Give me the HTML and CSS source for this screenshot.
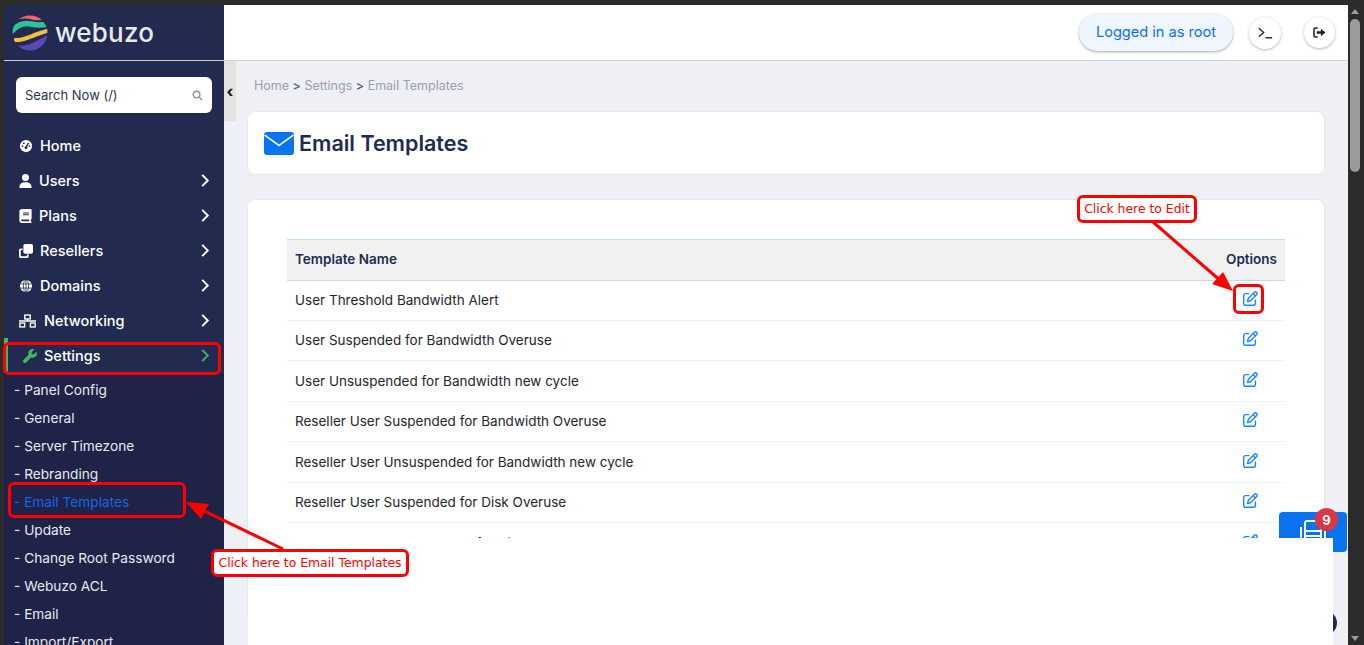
FILE: index.html
```html
<!DOCTYPE html>
<html lang="en">
<head>
<meta charset="utf-8">
<title>Email Templates</title>
<link rel="stylesheet" href="styles.css">
</head>
<body>
<svg class="defs" width="0" height="0">
  <symbol id="i-edit" viewBox="0 0 512 512"><path d="M441 58.9L453.1 71c9.4 9.4 9.4 24.6 0 33.9L424 134.1 377.9 88 407 58.9c9.4-9.4 24.6-9.4 33.9 0zM209.8 256.2L344 121.9 390.1 168 255.8 302.2c-2.9 2.9-6.5 5-10.4 6.1l-58.5 16.7 16.7-58.5c1.1-3.9 3.2-7.5 6.1-10.4zM373.1 25L175.8 222.2c-8.7 8.7-15 19.4-18.3 31.1l-28.6 100c-2.4 8.4-.1 17.4 6.1 23.6s15.2 8.5 23.6 6.1l100-28.6c11.8-3.4 22.5-9.7 31.1-18.3L487 138.9c28.1-28.1 28.1-73.7 0-101.8L474.9 25C446.8-3.1 401.2-3.1 373.1 25zM88 64C39.4 64 0 103.4 0 152V424c0 48.6 39.4 88 88 88H360c48.6 0 88-39.4 88-88V312c0-13.3-10.7-24-24-24s-24 10.7-24 24V424c0 22.1-17.9 40-40 40H88c-22.1 0-40-17.9-40-40V152c0-22.1 17.9-40 40-40H200c13.3 0 24-10.7 24-24s-10.7-24-24-24H88z"/></symbol>
  <symbol id="i-chev" viewBox="0 0 10 16"><path d="M2 2l6 6-6 6" fill="none" stroke="currentColor" stroke-width="2"/></symbol>
</svg>
<div class="strip-top"></div>
<div class="window">
  <div class="strip-left"></div>
  <div class="app">
    <aside class="sidebar">
      <div class="brand">
        <svg class="logo" viewBox="0 0 36 36">
          <defs><clipPath id="logo-clip"><circle cx="18" cy="18" r="17.5"/></clipPath></defs>
          <g clip-path="url(#logo-clip)" fill="none">
            <path d="M0 3C8 1 14 0 20 2C26 3.500 30 3 36 1" stroke="#f0646a" stroke-width="5"/>
            <path d="M-1 17C6 9 12 7.500 19 9C26 10.500 31 11 37 8" stroke="#2cc4a0" stroke-width="5.500"/>
            <path d="M2 25C10 26 17 22 24 19.500C28 18 32 17 37 15" stroke="#f9bd3f" stroke-width="4"/>
            <path d="M4 34C14 37 24 31 37 24" stroke="#5a48b4" stroke-width="8"/>
          </g>
        </svg>
        <span class="brand-name">webuzo</span>
      </div>
      <div class="search">
        <span>Search Now (/)</span>
        <svg class="search-icon" viewBox="0 0 12 12"><circle cx="5" cy="5" r="3.600"/><path d="M8 8l3 3"/></svg>
      </div>
      <nav class="nav">
        <a class="nav-item"><svg class="ni" viewBox="0 0 16 16"><circle cx="8" cy="8" r="7" fill="#fff"/><path d="M8 9.500L11 4.500" stroke="#222a50" stroke-width="1.600"/><circle cx="8" cy="10" r="1.600" fill="#222a50"/><circle cx="4" cy="8" r="1" fill="#222a50"/><circle cx="5.500" cy="4.800" r="1" fill="#222a50"/><circle cx="12" cy="8" r="1" fill="#222a50"/></svg><span class="label">Home</span></a>
        <a class="nav-item"><svg class="ni ni-tight" viewBox="0 0 448 512"><path d="M224 256A128 128 0 1 0 224 0a128 128 0 1 0 0 256zm-45.7 48C79.8 304 0 383.8 0 482.3C0 498.7 13.3 512 29.7 512H418.3c16.4 0 29.7-13.3 29.7-29.7C448 383.8 368.2 304 269.7 304H178.3z"/></svg><span class="label">Users</span><svg class="chev"><use href="#i-chev"/></svg></a>
        <a class="nav-item"><svg class="ni ni-tight" viewBox="0 0 448 512"><path d="M96 0C43 0 0 43 0 96V416c0 53 43 96 96 96H384h32c17.7 0 32-14.3 32-32s-14.3-32-32-32V384c17.7 0 32-14.3 32-32V32c0-17.7-14.3-32-32-32H384 96zm0 384H352v64H96c-17.7 0-32-14.3-32-32s14.3-32 32-32zm32-240c0-8.8 7.2-16 16-16H336c8.8 0 16 7.2 16 16s-7.2 16-16 16H144c-8.8 0-16-7.2-16-16zm16 48H336c8.8 0 16 7.2 16 16s-7.2 16-16 16H144c-8.8 0-16-7.2-16-16s7.2-16 16-16z"/></svg><span class="label">Plans</span><svg class="chev"><use href="#i-chev"/></svg></a>
        <a class="nav-item"><svg class="ni" viewBox="0 0 512 512"><path d="M288 448H64V224h64V160H64c-35.3 0-64 28.7-64 64V448c0 35.3 28.7 64 64 64H288c35.3 0 64-28.7 64-64V384H288v64zm-64-96H448c35.3 0 64-28.7 64-64V64c0-35.3-28.7-64-64-64H224c-35.3 0-64 28.7-64 64V288c0 35.3 28.7 64 64 64z"/></svg><span class="label">Resellers</span><svg class="chev"><use href="#i-chev"/></svg></a>
        <a class="nav-item"><svg class="ni" viewBox="0 0 16 16"><circle cx="8" cy="8" r="7" fill="#fff"/><g fill="none" stroke="#222a50" stroke-width=".9"><ellipse cx="8" cy="8" rx="3" ry="7"/><path d="M1 5.600h14M1 10.400h14M8 1v14"/></g></svg><span class="label">Domains</span><svg class="chev"><use href="#i-chev"/></svg></a>
        <a class="nav-item"><svg class="ni ni-wide" viewBox="0 0 20 16"><g fill="none" stroke="#fff" stroke-width="1.600"><rect x="6.800" y="1" width="6.400" height="4.600"/><rect x="1" y="10.400" width="5.600" height="4.600"/><rect x="13.400" y="10.400" width="5.600" height="4.600"/><path d="M10 5.600V8M0 8h20"/></g></svg><span class="label">Networking</span><svg class="chev"><use href="#i-chev"/></svg></a>
        <a class="nav-item is-active"><svg class="ni ni-wrench" viewBox="0 0 512 512"><path d="M352 320c88.4 0 160-71.6 160-160c0-15.3-2.2-30.1-6.2-44.2c-3.1-10.8-16.4-13.2-24.3-5.3l-76.8 76.8c-3 3-7.1 4.7-11.3 4.7H336c-8.8 0-16-7.2-16-16V118.6c0-4.2 1.7-8.3 4.7-11.3l76.8-76.8c7.9-7.9 5.4-21.2-5.3-24.3C382.1 2.2 367.3 0 352 0C263.6 0 192 71.6 192 160c0 19.1 3.4 37.5 9.5 54.5L19.9 396.1C7.2 408.8 0 426.1 0 444.1C0 481.6 30.4 512 67.9 512c18 0 35.3-7.2 48-19.9L297.5 310.5c17 6.2 35.4 9.5 54.5 9.5z"/></svg><span class="label">Settings</span><svg class="chev"><use href="#i-chev"/></svg></a>
      </nav>
      <ul class="subnav">
        <li>- Panel Config</li>
        <li>- General</li>
        <li>- Server Timezone</li>
        <li>- Rebranding</li>
        <li class="is-current">- Email Templates</li>
        <li>- Update</li>
        <li>- Change Root Password</li>
        <li>- Webuzo ACL</li>
        <li>- Email</li>
        <li>- Import/Export</li>
      </ul>
    </aside>
    <div class="content">
      <header class="topbar">
        <div class="pill">Logged in as root</div>
        <div class="round round-term"><svg viewBox="0 0 16 12"><path d="M1 1l5 4.500-5 4.500M8 11h7" fill="none" stroke="#222a50" stroke-width="1.500"/></svg></div>
        <div class="round round-out"><svg viewBox="0 0 14 12"><path d="M5 1H2.500C1.700 1 1 1.700 1 2.500v7C1 10.300 1.700 11 2.500 11H5" fill="none" stroke="#222" stroke-width="1.700"/><path d="M4 4.700h4.500V2L13.500 6 8.500 10V7.300H4z" fill="#222"/></svg></div>
      </header>
      <div class="workspace">
        <div class="toggle"><span>‹</span></div>
        <main class="page">
          <div class="crumbs">Home <b>&gt;</b> Settings <b>&gt;</b> Email Templates</div>
          <section class="card title-card">
            <svg class="mail" viewBox="0 0 30 23"><rect width="30" height="23" rx="3" fill="#0a74f0"/><path d="M0.500 3L15 13.500 29.500 3" fill="none" stroke="#e8f1fd" stroke-width="1.600"/></svg>
            <h1>Email Templates</h1>
          </section>
          <section class="card table-card">
            <div class="thead"><span>Template Name</span><span>Options</span></div>
            <div class="row"><span>User Threshold Bandwidth Alert</span><svg class="edit"><use href="#i-edit"/></svg></div>
            <div class="row"><span>User Suspended for Bandwidth Overuse</span><svg class="edit"><use href="#i-edit"/></svg></div>
            <div class="row"><span>User Unsuspended for Bandwidth new cycle</span><svg class="edit"><use href="#i-edit"/></svg></div>
            <div class="row"><span>Reseller User Suspended for Bandwidth Overuse</span><svg class="edit"><use href="#i-edit"/></svg></div>
            <div class="row"><span>Reseller User Unsuspended for Bandwidth new cycle</span><svg class="edit"><use href="#i-edit"/></svg></div>
            <div class="row"><span>Reseller User Suspended for Disk Overuse</span><svg class="edit"><use href="#i-edit"/></svg></div>
            <div class="row"><span>Reseller User Unsuspended for Disk Overuse</span><svg class="edit"><use href="#i-edit"/></svg></div>
          </section>
        </main>
      </div>
    </div>
  </div>
  <div class="scrollbar">
    <span class="arrow-up"></span>
    <span class="thumb"></span>
    <span class="arrow-down"></span>
  </div>
</div>

<div class="help-dot"></div>
<div class="widget">
  <svg class="widget-icon" viewBox="0 0 26 30"><g fill="none" stroke="#fff" stroke-width="2"><rect x="5" y="2" width="16" height="26" rx="2"/><path d="M1 8v16M25 8v16M5 12h16M5 17h16M5 22h16"/></g></svg>
  <span class="badge">9</span>
</div>
<div class="patch"></div>

<div class="hl hl-settings"></div>
<div class="hl hl-email"></div>
<div class="hl hl-edit"></div>
<svg class="arrows" viewBox="0 0 1364 645">
  <path d="M1153 222L1222 282M283 549L198 508"/>
  <polygon points="1233,291 1212,284 1223,272"/>
  <polygon points="186,502 209,504 201,519"/>
</svg>
<div class="callout callout-edit">Click here to Edit</div>
<div class="callout callout-email">Click here to Email Templates</div>
</body>
</html>
```
FILE: styles.css
```css
* { box-sizing: border-box; }
html, body { margin: 0; height: 100%; overflow: hidden; }
body {
  background: #2c2c2c;
  font-family: Inter, "Open Sans", sans-serif;
  display: flex;
  flex-direction: column;
  color: #222a50;
}
.defs { position: absolute; }
.strip-top { height: 5px; flex: none; background: #2c2c2c; }
.window { flex: 1; display: flex; min-height: 0; }
.strip-left { width: 4px; flex: none; background: #2c2c2c; }
.app { flex: 1; display: flex; min-width: 0; overflow: hidden; }

/* sidebar */
.sidebar {
  width: 220px;
  flex: none;
  background: #222a50;
  border-top-left-radius: 8px;
  color: #fff;
  overflow: hidden;
}
.brand {
  height: 56px;
  display: flex;
  align-items: center;
  padding: 0 0 0 8px;
  gap: 8px;
  border-bottom: 1px solid #cfd2da;
}
.logo { width: 36px; height: 36px; flex: none; }
.brand-name { font-size: 26px; letter-spacing: .2px; color: #e6e9f0; font-weight: 500; margin-left: -1px; }
.search {
  margin: 16px 12px 0;
  height: 36px;
  background: #fff;
  border-radius: 6px;
  display: flex;
  align-items: center;
  justify-content: space-between;
  padding: 0 9px;
  font-size: 13px;
  color: #2c3350;
}
.search-icon { width: 11px; height: 11px; fill: none; stroke: #8e939c; stroke-width: 1.500; }
.nav { margin-top: 15px; display: flex; flex-direction: column; }
.nav-item {
  height: 35px;
  display: flex;
  align-items: center;
  padding: 0 12px 0 15px;
  font-size: 14.500px;
  font-weight: 500;
}
.ni { width: 14px; height: 14px; fill: #fff; flex: none; margin-right: 7px; }
.ni-tight { width: 13px; margin-right: 7px; }
.ni-wide { width: 17px; margin-right: 8px; }
.ni-wrench { fill: #3cb868; margin-left: 4px; margin-right: 7px; }
.label { flex: 1; }
.chev { width: 10px; height: 15px; color: #fff; flex: none; margin-right: 2px; }
.is-active { background: #222a50; box-shadow: inset 4px 0 0 #3cb868; }
.is-active .chev { color: #3cb868; }
.subnav {
  list-style: none;
  margin: 0;
  padding: 3px 0 0 10px;
  background: #1e2347;
  font-size: 13.700px;
  color: #e8eaf0;
}
.subnav li { height: 28px; line-height: 28px; white-space: nowrap; }
.subnav .is-current { color: #1565e8; }

/* content */
.content { flex: 1; min-width: 0; display: flex; flex-direction: column; background: #eef0f5; }
.topbar {
  height: 56px;
  flex: none;
  background: #fff;
  border-bottom: 1px solid #cfd2d6;
  display: flex;
  align-items: center;
  justify-content: flex-end;
  padding: 0 13px 0 0;
}
.pill {
  width: 154px;
  height: 37px;
  border-radius: 19px;
  background: #f0f6ff;
  color: #0d6efd;
  font-size: 14.600px;
  display: flex;
  align-items: center;
  justify-content: center;
  padding-bottom: 2px;
  box-shadow: 0 1px 3px rgba(0,0,0,.35);
}
.round {
  width: 32px;
  height: 32px;
  border-radius: 50%;
  background: #fff;
  display: flex;
  align-items: center;
  justify-content: center;
  box-shadow: 0 1px 3px rgba(0,0,0,.3);
}
.round-term { margin-left: 16px; }
.round-out { margin-left: 23px; width: 31px; height: 31px; }
.round-term svg { width: 15px; height: 12px; }
.round-out svg { width: 13px; height: 11px; }
.workspace { flex: 1; display: flex; min-height: 0; }
.toggle {
  width: 12px;
  height: 60px;
  flex: none;
  background: #e3e3e3;
  display: flex;
  justify-content: center;
  align-items: center;
  font-size: 16px;
  font-weight: 700;
  color: #111;
}
.page { flex: 1; min-width: 0; padding: 0 23px 0 11px; overflow: hidden; }
.crumbs { height: 50px; padding: 17px 0 0 7px; font-size: 12.500px; color: #9a9eae; }
.crumbs b { font-weight: 500; color: #555a6e; }
.card { background: #fff; border: 1px solid #e6e8ec; border-radius: 8px; }
.title-card { height: 64px; display: flex; align-items: center; padding: 0 0 0 16px; gap: 5px; }
.mail { width: 30px; height: 23px; flex: none; }
h1 { margin: 0; font-size: 21.500px; font-weight: 600; color: #222a50; }
.table-card { margin-top: 24px; padding: 39px 39px 60px; }
.thead {
  height: 42px;
  background: #f1f1f1;
  border-top: 1px solid #c6dadd;
  border-bottom: 1px solid #c6dadd;
  display: flex;
  align-items: center;
  justify-content: space-between;
  padding: 0 8px 2px;
  font-size: 13.500px;
  font-weight: 600;
}
.row {
  height: 40.500px;
  display: flex;
  align-items: center;
  justify-content: space-between;
  padding: 0 27px 0 8px;
  border-bottom: 1px solid #edf2f8;
  font-size: 13.500px;
  color: #24262e;
}
.thead + .row { height: 39.500px; }
.edit { width: 15px; height: 15px; fill: #1a85ff; position: relative; top: -1.500px; }

/* scrollbar */
.scrollbar {
  width: 16px;
  flex: none;
  background: #2c2c2c;
  display: flex;
  flex-direction: column;
  align-items: center;
  padding: 4px 0;
}
.thumb { width: 10px; height: 153px; background: #9b9b9b; border-radius: 5px; margin-top: 5px; margin-left: -2px; }
.arrow-up { width: 0; height: 0; border: 4px solid transparent; border-top: 0; border-bottom: 5px solid #9b9b9b; margin-left: -2px; }
.arrow-down { width: 0; height: 0; border: 4px solid transparent; border-bottom: 0; border-top: 5px solid #9b9b9b; margin-top: auto; margin-left: -2px; }

/* floating things */
.widget {
  position: absolute;
  left: 1279px;
  top: 512px;
  width: 68px;
  height: 40px;
  background: #0a74f0;
  border-radius: 4px;
}
.widget-icon { position: absolute; left: 21px; top: 7px; width: 26px; height: 30px; }
.badge {
  position: absolute;
  left: 36px;
  top: -4px;
  width: 23px;
  height: 23px;
  border-radius: 50%;
  background: #dc3545;
  color: #fff;
  font-size: 13px;
  font-weight: 700;
  display: flex;
  align-items: center;
  justify-content: center;
}
.help-dot {
  position: absolute;
  left: 1313px;
  top: 611px;
  width: 24px;
  height: 24px;
  border-radius: 50%;
  background: #222a50;
}
.patch {
  position: absolute;
  left: 248px;
  top: 538px;
  width: 1085px;
  height: 107px;
  background: #fff;
}
.hl {
  position: absolute;
  border: 3px solid #f00;
  border-radius: 6px;
}
.hl-settings { left: 3px; top: 342px; width: 218px; height: 33px; }
.hl-email { left: 8px; top: 482px; width: 178px; height: 36px; }
.hl-edit { left: 1233px; top: 284px; width: 31px; height: 30px; }
.arrows { position: absolute; left: 0; top: 0; width: 1364px; height: 645px; pointer-events: none; }
.arrows path { stroke: #f00; stroke-width: 3; fill: none; }
.arrows polygon { fill: #f00; }
.callout {
  position: absolute;
  background: #fff;
  border: 3px solid #f00;
  border-radius: 6px;
  color: #f00;
  font-family: "DejaVu Sans", sans-serif;
  font-size: 12.400px;
  padding-bottom: 2px;
  white-space: nowrap;
  display: flex;
  align-items: center;
  justify-content: center;
}
.callout-edit { left: 1077px; top: 195px; width: 120px; height: 28px; }
.callout-email { left: 211px; top: 549px; width: 198px; height: 28px; }
```
